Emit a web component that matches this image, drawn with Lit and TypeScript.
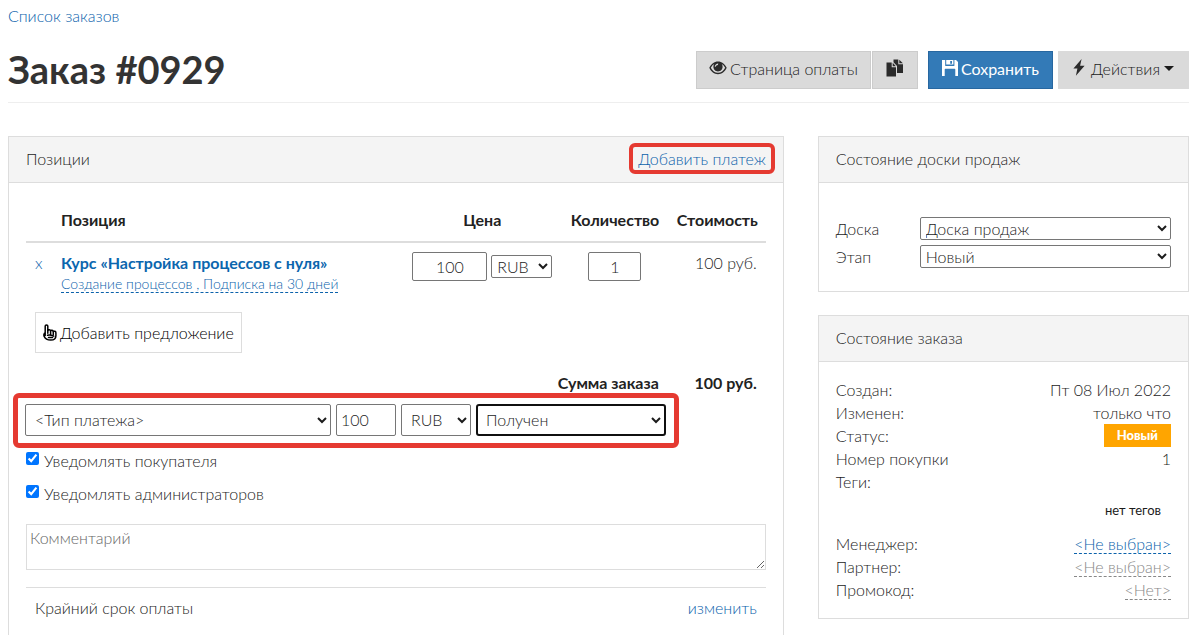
import { LitElement, html, css, svg } from "lit";
import { customElement, state } from "lit/decorators.js";

const eyeIcon = svg`<svg class="icon" width="18" height="14" viewBox="0 0 18 14" aria-hidden="true">
  <path fill="currentColor" fill-rule="evenodd" d="M9 .5C5.200 .5 2.100 3 .3 6.800c1.800 3.900 4.900 6.400 8.700 6.400s6.900-2.500 8.700-6.400C15.900 3 12.800.5 9 .5ZM5.200 3A4.700 4.700 0 0 0 4.400 5.700c0 2.600 2 4.700 4.600 4.700s4.600-2.100 4.600-4.700c0-.9-.3-1.900-.8-2.700 1.400.8 2.500 2.200 3.400 3.800-1.600 3-4.100 5-7.200 5s-5.600-2-7.200-5C2.700 5.200 3.800 3.800 5.200 3Z"/>
  <path fill="#dadada" d="M9.300 2.400 8.900 3.900C7.700 3.900 6.900 4.700 6.800 5.800L5.700 5.600C5.900 3.700 7.400 2.400 9.300 2.400Z"/></svg>`;

const copyIcon = svg`<svg class="icon" width="18" height="18" viewBox="0 0 18 18" aria-hidden="true">
  <path fill="currentColor" d="M.5 3.500h5.200v4.700H10V17.500H.5ZM6.700 3.700 9.900 7.200H6.700ZM7.500.5h4.800v4.700H17V14h-6V7L7.500 3.200ZM13.300.7 16.900 4.200h-3.600Z"/></svg>`;

const saveIcon = svg`<svg class="icon" width="16" height="16" viewBox="0 0 16 16" aria-hidden="true">
  <path fill="currentColor" fill-rule="evenodd" d="M0 0h3.200v5.500c0 .4.200.6.600.6h8c.4 0 .6-.2.600-.6V0H14l2 2v14h-2.700V9.500c0-.4-.2-.7-.6-.7H3.300c-.4 0-.6.3-.6.7V16H0ZM4.200 0H8.800v4.600H4.200ZM8.800 0h2.600v4.600H8.800ZM8.200 1v2.800h1.800V1Z"/></svg>`;

const boltIcon = svg`<svg class="icon" width="12" height="17" viewBox="0 0 12 17" aria-hidden="true">
  <path fill="currentColor" d="M8.600 0 .4 9.600h4L2.900 16.800 11.600 6.700H7.100Z"/></svg>`;

const handIcon = svg`<svg class="icon" width="14" height="17" viewBox="0 0 14 17" aria-hidden="true">
  <g fill="none" stroke="currentColor" stroke-width="1.500" stroke-linejoin="round" stroke-linecap="round">
  <path d="M2.200 9V2C2.200.5 4.800.5 4.800 2v4.500C5.200 5.200 7.400 5.400 7.600 6.900c.5-1 2.400-.8 2.700.6.8-.7 2.600-.2 2.600 1.200v3c0 2.700-2 4.400-5.200 4.400-3.400 0-5.500-1.200-6.500-3.600C.6 11 .8 9.300 2.200 9v2.600"/>
  <path d="M4.800 6v3.300M7.600 7v3M10.300 7.800v2.600M4.500 11.200c2-.6 4.300 0 6.300.9M5.500 13.500h4"/></g></svg>`;

@customElement("app-root")
class OrderPage extends LitElement {
  static styles = css`
    :host {
      display: block;
      padding: 4px 11px 0 8px;
      font: 300 16px/23px Lato, "Open Sans", sans-serif;
      color: #1c1c1c;
      background: #fff;
    }
    * { box-sizing: border-box; }
    a { color: #0b62ab; text-decoration: none; }
    button, input, select, textarea { font: inherit; color: inherit; margin: 0; }
    button { cursor: pointer; border-radius: 0; }

    header {
      display: flex;
      justify-content: space-between;
      align-items: center;
      margin: 24px 0 33px;
      padding-bottom: 13px;
      border-bottom: 1px solid #eee;
    }
    h1 { margin: 0; padding-bottom: 2px; font-size: 38px; line-height: 36px; font-weight: 700; color: #333; }
    .actions { display: flex; }
    .btn {
      display: flex;
      align-items: center;
      height: 38px;
      padding: 0 12px 3px;
      border: 1px solid #ccc;
      background: #dadada;
      white-space: nowrap;
    }
    .btn .icon { margin: 0 3px 2px 0; color: #2b2b2b; }
    .btn.copy { margin: 0 10px 0 1px; padding: 0 13px 3px; }
    .btn.copy .icon { margin-right: 0; }
    .btn.save { margin-right: 5px; padding: 0 13px 3px; color: #fff; background: #337ab7; border-color: #2767a0; font-weight: 400; }
    .btn.save .icon { color: #fff; }
    .btn.more { padding: 0 14px 3px; border-color: #dadada; }
    .btn.more .icon { margin-right: 6px; }
    .caret { margin-left: 4px; border: 5px solid transparent; border-top-color: currentColor; border-bottom: 0; }

    .columns { display: grid; grid-template-columns: minmax(0, 2.09fr) minmax(0, 1fr); gap: 34px; align-items: start; }
    .side { display: grid; gap: 23px; }
    .panel { border: 1px solid #ddd; }
    .panel h2 { margin: 0; font-size: 16px; line-height: 23px; font-weight: 300; }
    .heading {
      display: flex;
      justify-content: space-between;
      align-items: center;
      height: 46px;
      padding: 0 17px 2px;
      background: #f4f4f4;
      border-bottom: 1px solid #ddd;
    }
    .body { padding: 17px; }
    .side .body { padding-top: 16px; }
    .marked { border: 4px solid #e53a31; border-radius: 6px; }
    .heading .marked { padding: 0 5px; margin-right: -9px; }

    .items { width: 100%; border-collapse: separate; border-spacing: 0; table-layout: fixed; }
    .items th, .items td { padding: 8px 9px 10px; text-align: right; vertical-align: top; font-weight: 300; }
    .items thead th { border-bottom: 2px solid #ddd; }
    .items .strong, .items thead th { font-weight: 700; color: #222; }
    .items .left { text-align: left; }
    .items .center { text-align: center; }
    .items tbody .center { padding-top: 9px; }
    .c-x { width: 26px; }
    .c-price { width: 159px; }
    .c-count { width: 106px; }
    .c-sum { width: 98px; }
    .items .name { font-weight: 700; display: block; color: #0b66ae; }
    .items .offer { font-size: 14px; line-height: 20px; }
    .dashed { border-bottom: 1px dashed currentColor; }
    .items .offer .dashed { white-space: nowrap; }
    .price { display: flex; justify-content: center; align-items: center; gap: 4px; }
    .price input { width: 75px; }
    .price select { height: 23px; width: 61px; }
    .items input { height: 29px; text-align: center; }
    .qty { width: 53px; }
    input[type="text"], select { border: 1px solid #767676; border-radius: 2px; background: #fff; padding: 0 1px 1px; }
    .add {
      display: flex;
      align-items: center;
      gap: 3px;
      height: 41px;
      padding: 0 7px;
      color: #000;
      background: #fff;
      border: 1px solid #ddd;
    }

    .payment { display: flex; width: fit-content; gap: 5px; margin: -11px -13px 0; padding: 6px 8px 7px 7px; border-width: 5px; }
    .payment select, .payment input { height: 32px; }
    .payment select { padding: 0 5px 1px; }
    .payment input { width: 60px; padding: 0 4px 1px; }
    .type { width: 306px; }
    .currency { width: 70px; }
    .payment .status { width: 190px; border: 2px solid #101010; border-radius: 3px; padding: 0 4px 1px; }
    .check { display: flex; align-items: center; gap: 5px; margin-top: 10px; }
    .payment + .check { margin-top: 1px; }
    .check input { width: 13px; height: 13px; margin: 0 0 4px; }
    textarea { display: block; width: 100%; height: 46px; margin-top: 19px; padding: 1px 3px; border: 1px solid #ddd; }
    textarea::placeholder { color: #666; }
    .deadline { display: flex; justify-content: space-between; margin-top: 17px; padding: 8px 9px; border-top: 1px solid #ddd; }

    .board { display: grid; grid-template-columns: 84px minmax(0, 1fr); row-gap: 5px; padding: 34px 17px 23px; }
    .board select { height: 23px; }
    dl { margin: 0; }
    dl div { display: flex; justify-content: space-between; }
    dd { margin: 0; }
    .badge { display: block; height: 23px; padding: 0 13px; color: #fff; background: #ffa500; font-size: 13px; font-weight: 900; }
    .tags { margin: 6px 0 10px; padding-right: 10px; text-align: right; font-size: 13px; font-weight: 400; }
    .muted { color: #888; }
  `;

  @state() private notifyBuyer = true;
  @state() private notifyAdmins = true;

  render() {
    return html`
      <nav><a href="#orders">Список заказов</a></nav>
      <header>
        <h1>Заказ #0929</h1>
        <div class="actions">
          <button class="btn">${eyeIcon}Страница оплаты</button>
          <button class="btn copy" aria-label="Копировать">${copyIcon}</button>
          <button class="btn save">${saveIcon}Сохранить</button>
          <button class="btn more">${boltIcon}Действия<span class="caret"></span></button>
        </div>
      </header>
      <div class="columns">
        <main class="panel">
          <div class="heading"><h2>Позиции</h2><a class="marked" href="#payment">Добавить платеж</a></div>
          <div class="body">
            <table class="items">
              <colgroup><col class="c-x"><col><col class="c-price"><col class="c-count"><col class="c-sum"></colgroup>
              <thead>
                <tr><th></th><th class="left">Позиция</th><th class="center">Цена</th><th>Количество</th><th>Стоимость</th></tr>
              </thead>
              <tbody>
                <tr>
                  <td class="left"><a href="#remove">x</a></td>
                  <td class="left">
                    <a class="name" href="#course">Курс «Настройка процессов с нуля»</a>
                    <div class="offer"><a class="dashed" href="#offer">Создание процессов , Подписка на 30 дней</a></div>
                  </td>
                  <td class="center"><div class="price">
                    <input type="text" aria-label="Цена" value="100">
                    <select aria-label="Валюта цены"><option>RUB</option></select>
                  </div></td>
                  <td class="center"><input class="qty" type="text" aria-label="Количество" value="1"></td>
                  <td>100 руб.</td>
                </tr>
                <tr><td class="left" colspan="5"><button class="add">${handIcon}Добавить предложение</button></td></tr>
              </tbody>
              <tfoot>
                <tr><td class="strong" colspan="4">Сумма заказа</td><td class="strong">100 руб.</td></tr>
              </tfoot>
            </table>
            <div class="payment marked">
              <select class="type" aria-label="Тип платежа"><option>&lt;Тип платежа&gt;</option></select>
              <input type="text" aria-label="Сумма платежа" value="100">
              <select class="currency" aria-label="Валюта платежа"><option>RUB</option></select>
              <select class="status" aria-label="Статус платежа"><option>Получен</option></select>
            </div>
            <label class="check"><input type="checkbox" .checked=${this.notifyBuyer}
              @change=${() => (this.notifyBuyer = !this.notifyBuyer)}>Уведомлять покупателя</label>
            <label class="check"><input type="checkbox" .checked=${this.notifyAdmins}
              @change=${() => (this.notifyAdmins = !this.notifyAdmins)}>Уведомлять администраторов</label>
            <textarea placeholder="Комментарий" aria-label="Комментарий"></textarea>
            <div class="deadline"><span>Крайний срок оплаты</span><a href="#deadline">изменить</a></div>
          </div>
        </main>
        <aside class="side">
          <section class="panel">
            <div class="heading"><h2>Состояние доски продаж</h2></div>
            <div class="board">
              <label for="board">Доска</label><select id="board"><option>Доска продаж</option></select>
              <label for="stage">Этап</label><select id="stage"><option>Новый</option></select>
            </div>
          </section>
          <section class="panel">
            <div class="heading"><h2>Состояние заказа</h2></div>
            <div class="body">
              <dl>
                <div><dt>Создан:</dt><dd>Пт 08 Июл 2022</dd></div>
                <div><dt>Изменен:</dt><dd>только что</dd></div>
                <div><dt>Статус:</dt><dd class="badge">Новый</dd></div>
                <div><dt>Номер покупки</dt><dd>1</dd></div>
                <div><dt>Теги:</dt></div>
              </dl>
              <p class="tags">нет тегов</p>
              <dl>
                <div><dt>Менеджер:</dt><dd><a class="dashed" href="#manager">&lt;Не выбран&gt;</a></dd></div>
                <div><dt>Партнер:</dt><dd><a class="dashed muted" href="#partner">&lt;Не выбран&gt;</a></dd></div>
                <div><dt>Промокод:</dt><dd><a class="dashed muted" href="#promo">&lt;Нет&gt;</a></dd></div>
              </dl>
            </div>
          </section>
        </aside>
      </div>
    `;
  }
}
